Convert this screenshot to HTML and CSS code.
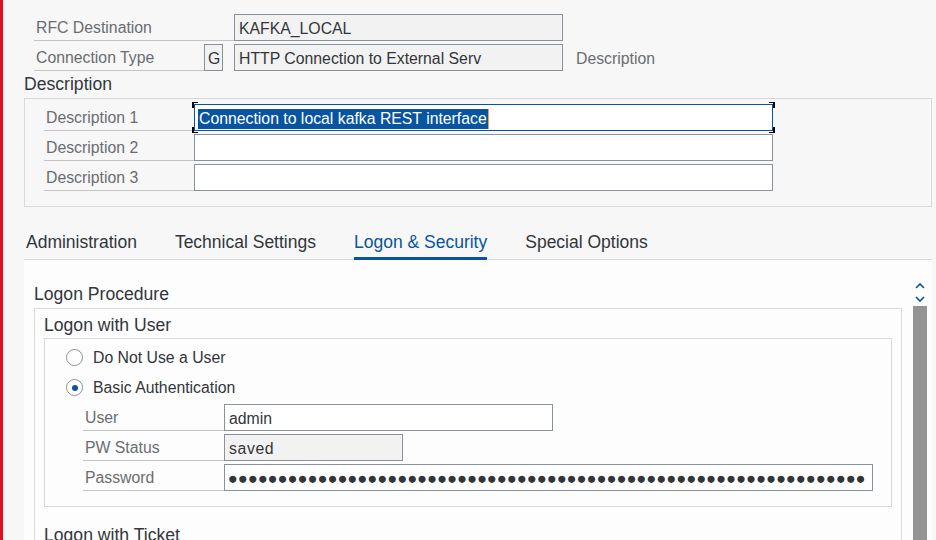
FILE: index.html
```html
<!DOCTYPE html>
<html>
	<head>
		<meta charset="UTF-8">
		<title>RFC Destination KAFKA_LOCAL</title>
		<link rel="stylesheet" href="styles.css">
	</head>
	<body>
		<div class="app">
			<div class="head">
				<div class="row">
					<div class="lbl w200">RFC Destination</div>
					<div class="fld ro w329">KAFKA_LOCAL</div>
				</div>
				<div class="row">
					<div class="lbl w170">Connection Type</div>
					<div class="fld ro code">G</div>
					<div class="fld ro w329">HTTP Connection to External Serv</div>
					<div class="hint">Description</div>
				</div>
			</div>

			<div class="sect">Description</div>
			<div class="grp">
				<div class="row">
					<div class="lbl w150">Description 1</div>
					<div class="fld w579 focus"><span class="sel">Connection to local kafka REST interface</span></div>
				</div>
				<div class="row">
					<div class="lbl w150">Description 2</div>
					<div class="fld w579"></div>
				</div>
				<div class="row">
					<div class="lbl w150">Description 3</div>
					<div class="fld w579"></div>
				</div>
			</div>

			<div class="tabs">
				<div class="tab">Administration</div>
				<div class="tab">Technical Settings</div>
				<div class="tab on">Logon &amp; Security</div>
				<div class="tab">Special Options</div>
			</div>

			<div class="content">
				<div class="pane">
					<div class="sect h30">Logon Procedure</div>
					<div class="box">
						<div class="sect h29">Logon with User</div>
						<div class="sub">
							<div class="radio"><span class="dot"></span>Do Not Use a User</div>
							<div class="radio"><span class="dot on"></span>Basic Authentication</div>
							<div class="fields">
								<div class="row">
									<div class="lbl w141">User</div>
									<div class="fld w329">admin</div>
								</div>
								<div class="row">
									<div class="lbl w141">PW Status</div>
									<div class="fld ro w179 spaced">saved</div>
								</div>
								<div class="row">
									<div class="lbl w141">Password</div>
									<div class="fld w649 pw">●●●●●●●●●●●●●●●●●●●●●●●●●●●●●●●●●●●●●●●●●●●●●●●●●●●●●●●●●●●●●●●●</div>
								</div>
							</div>
						</div>
						<div class="sect h29 next">Logon with Ticket</div>
					</div>
				</div>
				<div class="sbar">
					<div class="arrows">
						<svg width="14" height="28" viewBox="0 0 14 28">
							<polyline points="3,10 7,6 11,10" fill="none" stroke="#0854a0" stroke-width="1.6"/>
							<polyline points="3,19 7,23 11,19" fill="none" stroke="#0854a0" stroke-width="1.6"/>
						</svg>
					</div>
					<div class="thumb"></div>
				</div>
			</div>
		</div>
	</body>
</html>
```
FILE: styles.css
```css
*{
	padding: 0;
	margin: 0;
	box-sizing: border-box;
}
body{
	background: #f7f7f7;
	font-family: "Liberation Sans", Arial, sans-serif;
	font-size: 15.8px;
	color: #32363a;
	overflow: hidden;
}
.app{
	height: 540px;
	border-left: 3px solid #e2101e;
	padding: 14px 4px 0 21px;
	overflow: hidden;
}
.head{
	padding-left: 10px;
	display: flex;
	flex-direction: column;
	gap: 3px;
}
.row{
	display: flex;
	height: 27px;
}
.lbl{
	display: flex;
	align-items: center;
	padding: 2px 0 0 2px;
	color: #6a6d70;
	border-bottom: 1px solid #c4c4c4;
	white-space: nowrap;
}
.w141{width: 141px;}
.w150{width: 150px;}
.w170{width: 170px;}
.w200{width: 200px;}
.fld{
	display: flex;
	align-items: center;
	height: 27px;
	padding: 2px 4px 0;
	background: #fff;
	border: 1px solid #89919a;
	white-space: nowrap;
	overflow: hidden;
}
.fld.ro{background: #f2f2f2;}
.fld.code{width: 19px; padding: 2px 3px 0; margin-right: 11px;}
.w179{width: 179px;}
.w329{width: 329px;}
.w579{width: 579px;}
.w649{width: 649px;}
.hint{
	display: flex;
	align-items: center;
	padding-top: 2px;
	margin-left: 13px;
	color: #6a6d70;
}
.spaced{letter-spacing: 0.6px;}
.pw{
	font-size: 16.5px;
	padding-left: 3px;
	color: #32363a;
}

/* focused field */
.fld.focus{
	position: relative;
	overflow: visible;
	border-color: #0854a0;
	padding-left: 3px;
}
.fld.focus::before{
	content: "";
	position: absolute;
	top: -3px;
	left: -3px;
	right: -3px;
	bottom: -3px;
	background:
		linear-gradient(#000,#000) left top / 6px 1px no-repeat,
		linear-gradient(#000,#000) left top / 2px 6px no-repeat,
		linear-gradient(#000,#000) right top / 6px 1px no-repeat,
		linear-gradient(#000,#000) right top / 2px 6px no-repeat,
		linear-gradient(#000,#000) left bottom / 6px 1px no-repeat,
		linear-gradient(#000,#000) left bottom / 2px 6px no-repeat,
		linear-gradient(#000,#000) right bottom / 6px 1px no-repeat,
		linear-gradient(#000,#000) right bottom / 2px 6px no-repeat;
}
.sel{
	background: #0854a0;
	color: #fff;
	padding: 1px 1px 1px;
	border-right: 1px solid #e9a13b;
}

.sect{
	font-size: 17.6px;
	line-height: 27px;
	height: 27px;
	color: #32363a;
}
.sect.h30{height: 30px; line-height: 32px;}
.sect.h29{height: 29px; line-height: 32px;}
.sect.next{margin-top: 12px;}

.grp{
	border: 1px solid #d9d9d9;
	padding: 5px 0 15px 19px;
	display: flex;
	flex-direction: column;
	gap: 3px;
}

.tabs{
	display: flex;
	gap: 38px;
	height: 53px;
	padding-left: 2px;
	border-bottom: 1px solid #d9d9d9;
}
.tab{
	font-size: 17.5px;
	line-height: 20px;
	padding-top: 25px;
	margin-bottom: -1px;
	color: #32363a;
}
.tab.on{
	color: #0854a0;
	box-shadow: inset 0 -3px #0854a0;
}

.content{
	display: flex;
	height: 300px;
	background: #fdfdfd;
	padding: 18px 5px 0 10px;
}
.pane{
	flex: 1;
	margin-right: 11px;
}
.box{
	border: 1px solid #d9d9d9;
	border-bottom: none;
	padding: 0 9px;
	height: 300px;
}
.sub{
	border: 1px solid #d9d9d9;
	padding: 3px 0 15px 21px;
}
.radio{
	display: flex;
	align-items: center;
	padding-top: 1px;
	height: 30px;
	gap: 10px;
}
.dot{
	width: 17px;
	height: 17px;
	border: 1px solid #89919a;
	border-radius: 50%;
	background: #fff;
	display: flex;
	align-items: center;
	justify-content: center;
}
.dot.on::after{
	content: "";
	width: 6px;
	height: 6px;
	border-radius: 50%;
	background: #0854a0;
}
.fields{
	margin-top: 2px;
	margin-left: 17px;
	display: flex;
	flex-direction: column;
	gap: 3px;
}
.sbar{
	width: 14px;
	background: #fff;
	display: flex;
	flex-direction: column;
}
.arrows{
	height: 28px;
}
.arrows svg{display: block;}
.thumb{
	flex: 1;
	background: #949494;
}
```
